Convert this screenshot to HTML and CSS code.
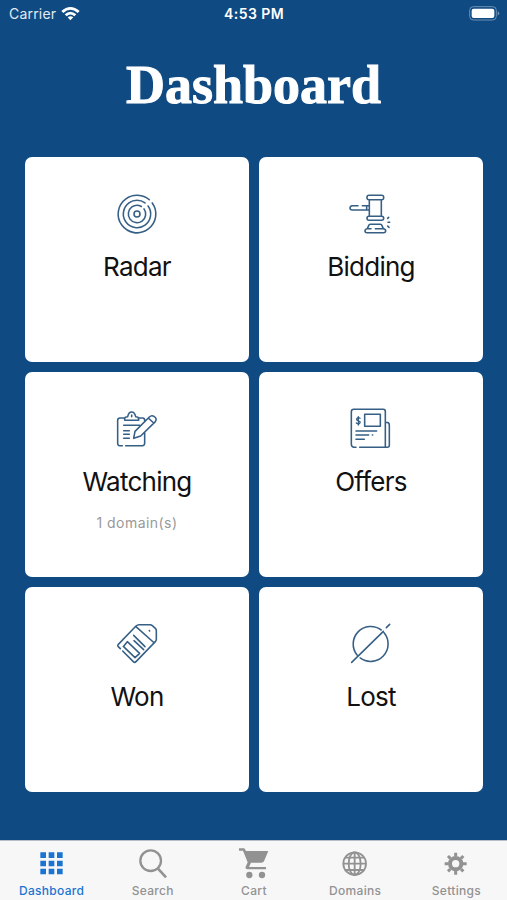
FILE: index.html
```html
<!DOCTYPE html>
<html lang="en">
<head>
<meta charset="utf-8">
<title>Dashboard</title>
<link rel="stylesheet" href="styles.css">
</head>
<body>
<div class="app">
  <header class="status">
    <div class="carrier"><span>Carrier</span>
      <svg class="wifi" viewBox="0 0 57 45"><path d="M1 15Q28 -9 56 15L50 21Q28 2 7 21Z"/><path d="M11 25Q28 9 46 25L40 31Q28 20 17 31Z"/><path d="M20 34Q28 27 37 34L28 43Z"/></svg>
    </div>
    <div class="time">4:53 PM</div>
    <div class="power"><svg class="battery" viewBox="0 0 93 45"><rect x="2" y="2" width="80" height="40" rx="11" fill="none" stroke="#6f90b3" stroke-width="3"/><rect x="8" y="8" width="68" height="28" rx="6" fill="#fff"/><path d="M86 15Q96 22 86 29Z" fill="#6f90b3"/></svg></div>
  </header>
  <h1 class="heading">Dashboard</h1>
  <main class="grid">
    <section class="card">
      <svg class="icon" viewBox="39 30 144 144"><g transform="rotate(-36 111 102)"><circle cx="111" cy="102" r="56.5" pathLength="360" stroke-dasharray="345 15"/><circle cx="111" cy="102" r="41" pathLength="360" stroke-dasharray="340 20"/><circle cx="111" cy="102" r="26" pathLength="360" stroke-dasharray="336 24"/></g><circle cx="111" cy="102" r="9"/></svg>
      <h2 class="name">Radar</h2>
    </section>
    <section class="card">
      <svg class="icon" viewBox="36 30 144 144"><rect x="96" y="46" width="50" height="13" rx="6"/><path d="M103 60V108M139 60V108"/><rect x="96" y="109" width="50" height="12" rx="6"/><path d="M102 77H82M69 77H52Q45 78 45 84Q45 90 52 90H102M95 77V90M97 146L101 137Q102 133 106 133H136Q140 133 141 137L145 146M121 146H145Q152 147 152 152Q152 158 146 158H96Q90 158 90 152Q91 146 97 146H108M158 115L161 112M159 127H164M158 138L162 142"/></svg>
      <h2 class="name">Bidding</h2>
    </section>
    <section class="card">
      <svg class="icon" viewBox="39 15 144 144"><path d="M67 137H59Q53 137 53 130V61Q53 54 60 54H75M114 54H128Q134 54 134 61V66M134 97V130Q134 137 127 137H77M74 61V55Q74 51 83 50Q86 36 95 36Q104 36 107 50Q116 51 116 55V61ZM95 45V50M71 76H119M71 92H88M71 103H88M71 115H88M101 115L105 94L148 51Q155 44 163 50Q172 56 166 65L122 108ZM145 54L161 69"/></svg>
      <h2 class="name">Watching</h2>
      <p class="count">1 domain(s)</p>
    </section>
    <section class="card">
      <svg class="icon" viewBox="36 15 144 144"><path d="M63 142H56Q49 140 49 133V35Q49 28 56 28H145Q151 28 151 35V142M74 142H157Q163 142 163 136V75Q163 67 153 67"/><rect x="89" y="43" width="47" height="36"/><path d="M63 93H125M63 105H101M63 118H88M112 105H113"/><path class="dollar" d="M75 55Q70 51 66 55Q63 61 70 62Q78 65 74 70Q69 73 64 69M70 50V75"/></svg>
      <h2 class="name">Offers</h2>
    </section>
    <section class="card">
      <svg class="icon" viewBox="39 30 144 144"><path d="M61 116L54 109Q52 106 55 103L108 48Q112 44 117 44H150Q154 44 157 47L166 55Q169 58 169 62V88Q169 92 166 95L108 155Q104 159 100 155L68 123M107 49L163 99M101 76L135 110M102 92L131 119M71 109L82 95L119 130L105 143L70 109M148 62L149 63"/></svg>
      <h2 class="name">Won</h2>
    </section>
    <section class="card">
      <svg class="icon" viewBox="36 30 144 144"><path d="M138.5 60A52.5 52.5 0 0 0 66.2 135M75.4 143.9A52.5 52.5 0 0 0 147.2 68.3M50 157L145 64M154 53L164 43"/></svg>
      <h2 class="name">Lost</h2>
    </section>
  </main>
  <nav class="tabs">
    <a class="tab active"><svg viewBox="0 0 96 96"><path d="M13 16h17v17H13zM38 16h17v17H38zM63 16h17v17H63zM13 41h17v17H13zM38 41h17v17H38zM63 41h17v17H63zM13 65h17v17H13zM38 65h17v17H38zM63 65h17v17H63z"/></svg><span>Dashboard</span></a>
    <a class="tab"><svg viewBox="0 0 96 96"><g fill="none" stroke="currentColor"><circle cx="41" cy="41" r="31" stroke-width="7"/><path d="M63 65L87 91" stroke-width="8"/></g></svg><span>Search</span></a>
    <a class="tab"><svg viewBox="0 0 96 96"><path d="M3 4H19L24 12H91L78 43Q76 47 70 47H39L33 60H84V67H29Q19 67 24 57L29 46L15 11H3Z"/><circle cx="34" cy="84" r="9.5"/><circle cx="72" cy="84" r="9.5"/></svg><span>Cart</span></a>
    <a class="tab"><svg viewBox="0 0 96 96"><g fill="none" stroke="currentColor" stroke-width="5.5"><circle cx="47" cy="50" r="34"/><ellipse cx="47" cy="50" rx="18" ry="34"/><path d="M47 16V84M13 50H81M20 32H74M20 69H74"/></g></svg><span>Domains</span></a>
    <a class="tab"><svg viewBox="0 0 96 96"><g fill="none" stroke="currentColor"><circle cx="47" cy="50" r="17" stroke-width="12"/><path d="M47 28V17M47 72V83M25 50H14M69 50H80M31 34L24 27M63 34L70 27M31 66L24 73M63 66L70 73" stroke-width="9"/></g></svg><span>Settings</span></a>
  </nav>
</div>
</body>
</html>
```
FILE: styles.css
```css
* { box-sizing: border-box; }
body { margin: 0; font-family: Inter, "Liberation Sans", sans-serif; }
.app { height: 900px; display: flex; flex-direction: column; background: #0f4a82; overflow: hidden; }
.status { height: 28px; padding: 0 7px 0 9px; display: grid; grid-template-columns: 1fr auto 1fr; align-items: center; color: #fff; font-size: 14px; line-height: 28px; }
.carrier { display: flex; align-items: center; gap: 5px; color: #e2ebf3; letter-spacing: .2px; }
.wifi { width: 19px; height: 15px; margin-top: -2px; fill: #fff; }
.time { font-weight: 600; font-size: 14px; letter-spacing: .45px; margin-left: -1px; }
.power { display: flex; justify-content: flex-end; }
.battery { width: 31px; height: 15px; margin-top: -2px; }
.heading { margin: 24px 0 0; height: 105px; text-align: center; font: bold 54px/66px "Liberation Serif", serif; color: #fff; -webkit-text-stroke: 1px #fff; }
.grid { height: 635px; margin: 0 24px 0 25px; display: grid; grid-template-columns: 1fr 1fr; grid-template-rows: repeat(3, 1fr); gap: 10px; }
.card { display: flex; flex-direction: column; align-items: center; padding-top: 33px; background: #fff; border-radius: 7px; }
.icon { width: 48px; height: 48px; flex: none; fill: none; stroke: #365f86; stroke-width: 4.7; stroke-linecap: round; stroke-linejoin: round; }
.dollar { stroke-width: 4; }
.name { margin: 11px 0 0; font-size: 26px; line-height: 36px; font-weight: 400; color: #111; letter-spacing: -.75px; }
.count { margin: 13px 0 0; font-size: 14px; line-height: 20px; color: #999; letter-spacing: .45px; }
.tabs { margin-top: auto; height: 60px; padding-left: 1px; display: grid; grid-template-columns: repeat(5, 1fr); background: #f7f7f7; border-top: 1px solid #b6bec7; }
.tab { display: flex; flex-direction: column; align-items: center; padding-top: 6px; color: #929292; font-size: 12px; line-height: 16px; font-weight: 500; letter-spacing: .3px; }
.tab svg { width: 32px; height: 32px; fill: currentColor; margin-bottom: 4px; }
.active { color: #1b74d2; }
```
